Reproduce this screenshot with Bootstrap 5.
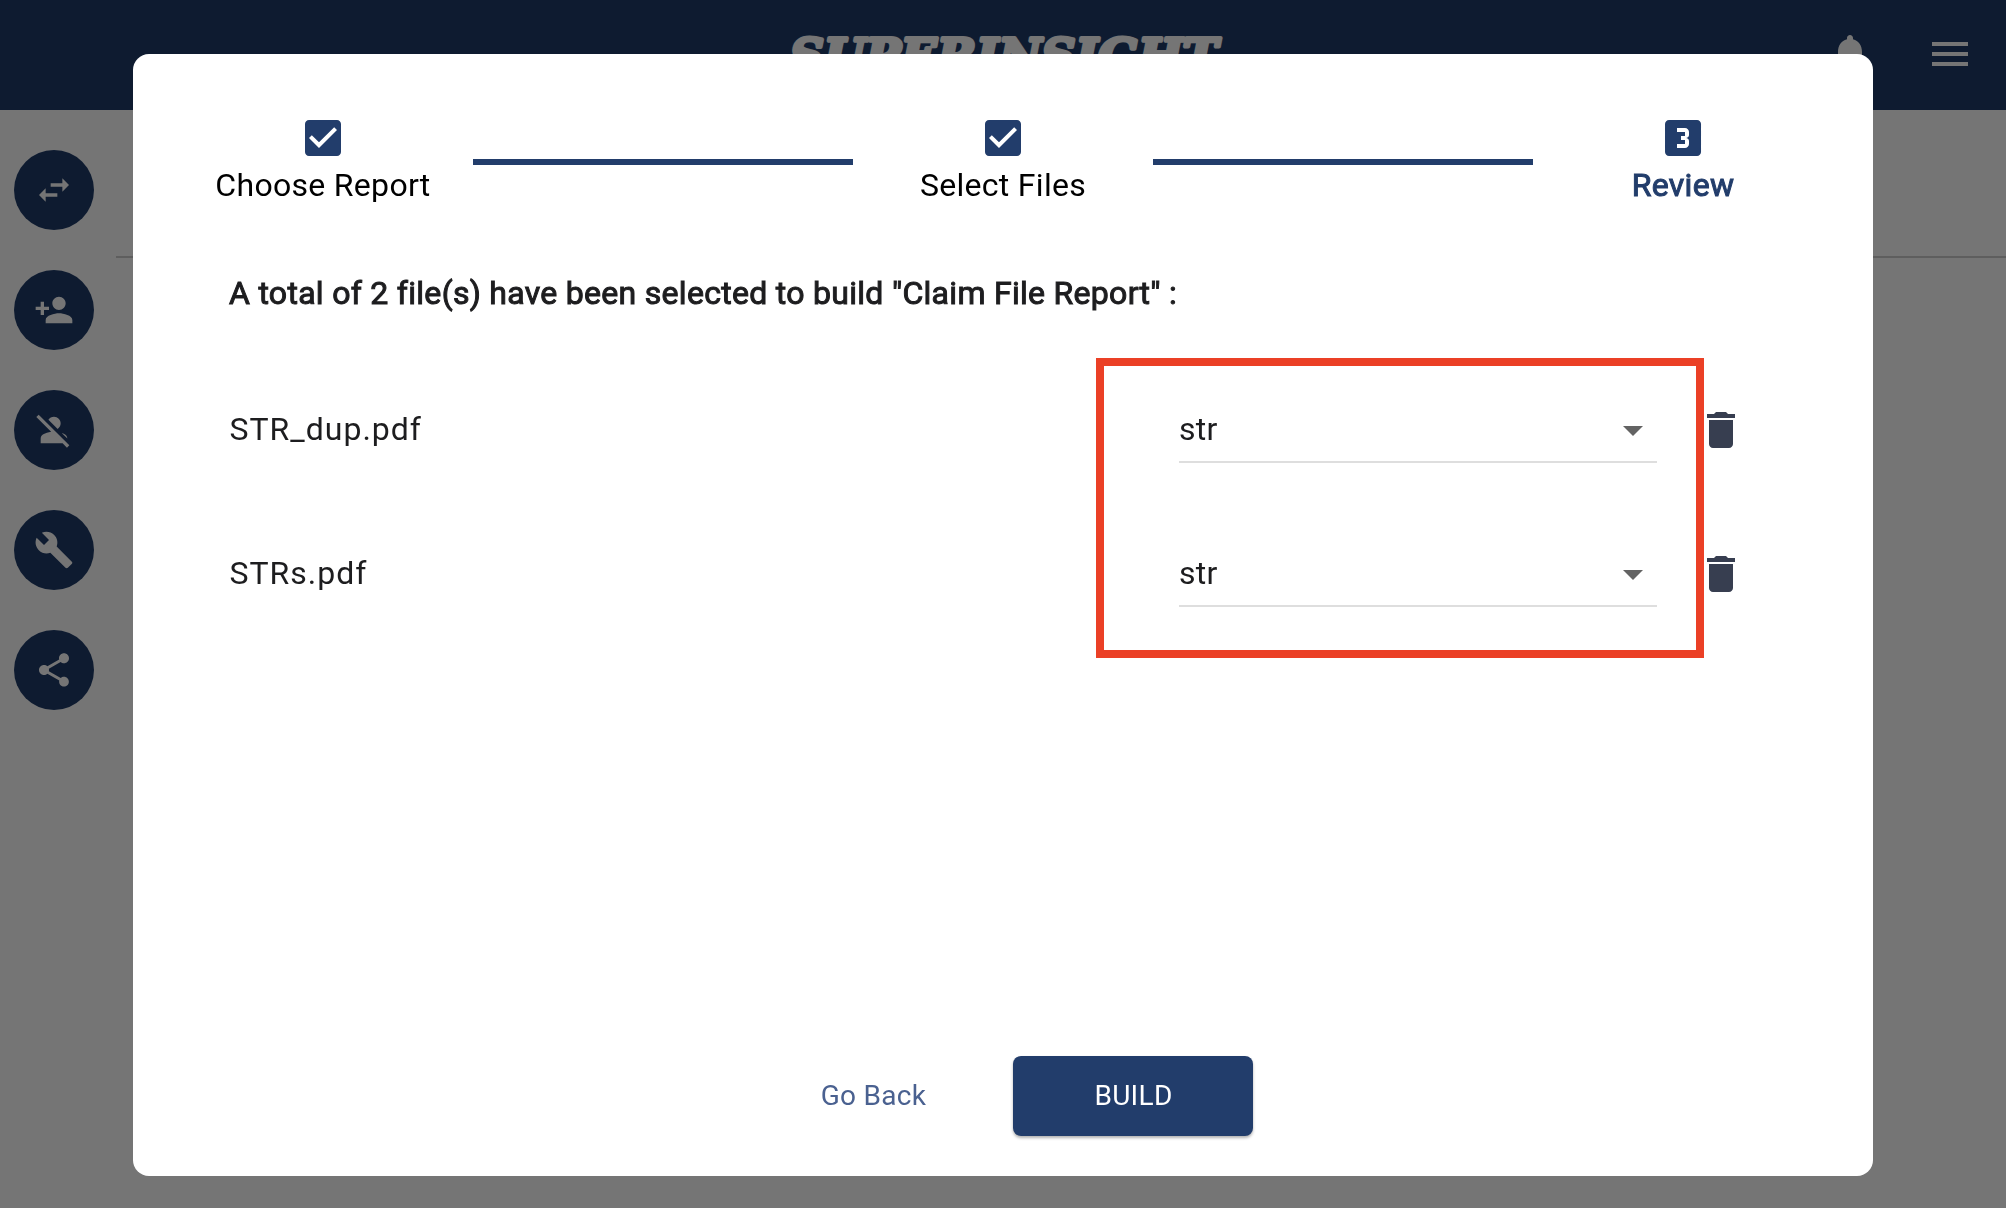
<!DOCTYPE html>
<html lang="en">
<head>
<meta charset="utf-8">
<meta name="viewport" content="width=device-width, initial-scale=1">
<title>Superinsight</title>
<link rel="stylesheet" href="https://cdn.jsdelivr.net/npm/bootstrap@5.3.0/dist/css/bootstrap.min.css">
<style>
  :root { --brand: #223d6b; --ink: #1d1d1f; }
  html { height: 100%; overflow: hidden; }
  body { font-family: Roboto, sans-serif; font-size: 32px; line-height: 40px; letter-spacing: .3px; color: var(--ink); background: #fff; height: 100%; overflow: hidden; }
  svg { display: block; fill: currentColor; flex: none; }
  .topbar { height: 110px; padding: 0 32px 2px; background: #1f3c6a; color: #fff; }
  .topbar-side { width: 150px; gap: 52px; }
  .brand-text { font: italic bold 46px "DejaVu Serif", serif; stroke: #fff; stroke-width: 4px; stroke-linejoin: round; }
  .rail { width: 116px; padding: 40px 0 0 14px; gap: 40px; }
  .rail-btn { width: 80px; height: 80px; background: #1f3c6a; border: 0; color: #fff; padding: 0; }
  .page-head { height: 148px; border-bottom: 2px solid #ccc; }
  .modal-backdrop.dim { opacity: .54; width: 100%; height: 100%; }
  .wizard { width: 1740px; max-width: none; margin: 54px auto 0; }
  .wizard .modal-content { height: 1122px; border: 0; border-radius: 16px; padding: 60px 50px 40px; color: var(--ink); }
  .step-item { width: 280px; color: #000; gap: 3px; }
  .step-item svg { color: var(--brand); }
  .step-now { color: var(--brand); }
  .step-line { width: 380px; height: 6px; background: var(--brand); margin-top: 45px; }
  .heavier { -webkit-text-stroke: 1px currentColor; }
  .summary { margin: 68px 0 45px 46px; letter-spacing: .29px; }
  .file-list { margin-left: 46px; }
  .file-row { height: 144px; }
  .file-name { width: 950px; letter-spacing: 1px; padding: 0 0 2px .5px; }
  .type-select { width: 478px; height: 66px; border-bottom: 2px solid #dedede; padding-right: 14px; }
  .caret { width: 20px; height: 10px; background: #636363; clip-path: polygon(0 0, 100% 0, 50% 100%); margin-top: 4px; }
  .trash { color: #373e50; margin-left: 40px; }
  .callout-box { left: 867px; top: 0; width: 608px; height: 300px; border: 8px solid #eb4026; }
  .actions { gap: 20px; }
  .actions .btn { width: 240px; height: 80px; font-size: 28px; letter-spacing: .3px; border: 0; border-radius: 8px; padding: 0 0 0 1px; }
  .btn-back { color: #4a6190; }
  .btn-build, .btn-build:hover { background: var(--brand); color: #fff; box-shadow: 0 2px 3px rgba(0,0,0,.3); }
</style>
<script src="https://cdn.jsdelivr.net/npm/bootstrap@5.3.0/dist/js/bootstrap.bundle.min.js"></script>
</head>
<body>
<header class="topbar d-flex align-items-center justify-content-between">
  <div class="topbar-side"></div>
  <svg width="440" height="60" viewBox="0 0 440 60" style="margin-left:8px"><text class="brand-text" x="3" y="47.5" textLength="428" lengthAdjust="spacingAndGlyphs">SUPERINSIGHT</text></svg>
  <div class="topbar-side d-flex justify-content-end">
    <svg width="48" height="48" viewBox="0 0 24 24"><path d="M12 22c1.1 0 2-.9 2-2h-4c0 1.1.89 2 2 2zm6-6v-5c0-3.07-1.64-5.64-4.5-6.32V4c0-.83-.67-1.5-1.5-1.5s-1.5.67-1.5 1.5v.68C7.63 5.36 6 7.92 6 11v5l-2 2v1h16v-1l-2-2z"/></svg>
    <svg width="48" height="48" viewBox="0 0 24 24"><path d="M3 18h18v-2H3v2zm0-5h18v-2H3v2zm0-7v2h18V6H3z"/></svg>
  </div>
</header>
<main class="d-flex">
  <nav class="rail d-flex flex-column">
    <button class="rail-btn rounded-circle d-flex align-items-center justify-content-center" aria-label="Switch"><svg width="40" height="40" viewBox="0 0 24 24"><path d="M6.99 11L3 15l3.99 4v-3H14v-2H6.99v-3zM21 9l-3.99-4v3H10v2h7.01v3L21 9z"/></svg></button>
    <button class="rail-btn rounded-circle d-flex align-items-center justify-content-center" aria-label="Add person"><svg width="40" height="40" viewBox="0 0 24 24"><path d="M15 12c2.21 0 4-1.79 4-4s-1.79-4-4-4-4 1.79-4 4 1.79 4 4 4zm-9-2V7H4v3H1v2h3v3h2v-3h3v-2H6zm9 4c-2.67 0-8 1.34-8 4v2h16v-2c0-2.66-5.33-4-8-4z"/></svg></button>
    <button class="rail-btn rounded-circle d-flex align-items-center justify-content-center" aria-label="Remove person"><svg width="40" height="40" viewBox="0 0 24 24"><path d="M8.65 5.82C9.36 4.72 10.6 4 12 4c2.21 0 4 1.79 4 4 0 1.4-.72 2.64-1.82 3.35L8.65 5.82zM20 17.17c-.02-1.1-.63-2.11-1.61-2.62-.54-.28-1.13-.54-1.77-.76L20 17.17zm1.19 4.02L2.81 2.81 1.39 4.22l8.89 8.89c-1.81.23-3.39.79-4.67 1.45-1 .51-1.61 1.54-1.61 2.66V20h13.17l2.61 2.61 1.41-1.42z"/></svg></button>
    <button class="rail-btn rounded-circle d-flex align-items-center justify-content-center" aria-label="Tools"><svg width="40" height="40" viewBox="0 0 24 24"><path d="M22.7 19l-9.1-9.1c.9-2.3.4-5-1.5-6.9-2-2-5-2.4-7.4-1.3L9 6 6 9 1.6 4.7C.4 7.1.9 10.1 2.9 12.1c1.9 1.9 4.6 2.4 6.9 1.5l9.1 9.1c.4.4 1 .4 1.4 0l2.3-2.3c.5-.4.5-1.1.1-1.4z"/></svg></button>
    <button class="rail-btn rounded-circle d-flex align-items-center justify-content-center" aria-label="Share"><svg width="40" height="40" viewBox="0 0 24 24"><path d="M18 16.08c-.76 0-1.44.3-1.96.77L8.91 12.7c.05-.23.09-.46.09-.7s-.04-.47-.09-.7l7.05-4.11c.54.5 1.25.81 2.04.81 1.66 0 3-1.34 3-3s-1.34-3-3-3-3 1.34-3 3c0 .24.04.47.09.7L8.04 9.81C7.5 9.31 6.79 9 6 9c-1.66 0-3 1.34-3 3s1.34 3 3 3c.79 0 1.5-.31 2.04-.81l7.12 4.16c-.05.21-.08.43-.08.65 0 1.61 1.31 2.92 2.92 2.92s2.92-1.31 2.92-2.92-1.31-2.92-2.92-2.92z"/></svg></button>
  </nav>
  <section class="flex-grow-1"><div class="page-head"></div></section>
</main>

<div class="modal-backdrop dim"></div>
<div class="modal show d-block overflow-hidden" tabindex="-1" role="dialog">
  <div class="modal-dialog wizard">
    <div class="modal-content">
      <div class="d-flex justify-content-between">
        <div class="step-item d-flex flex-column align-items-center">
          <svg width="48" height="48" viewBox="0 0 24 24"><path d="M19 3H5c-1.11 0-2 .9-2 2v14c0 1.1.89 2 2 2h14c1.11 0 2-.9 2-2V5c0-1.1-.89-2-2-2zm-9 14l-5-5 1.41-1.41L10 14.17l7.59-7.59L19 8l-9 9z"/></svg>
          <span>Choose Report</span>
        </div>
        <div class="step-line"></div>
        <div class="step-item d-flex flex-column align-items-center">
          <svg width="48" height="48" viewBox="0 0 24 24"><path d="M19 3H5c-1.11 0-2 .9-2 2v14c0 1.1.89 2 2 2h14c1.11 0 2-.9 2-2V5c0-1.1-.89-2-2-2zm-9 14l-5-5 1.41-1.41L10 14.17l7.59-7.59L19 8l-9 9z"/></svg>
          <span>Select Files</span>
        </div>
        <div class="step-line"></div>
        <div class="step-item step-now d-flex flex-column align-items-center">
          <svg width="48" height="48" viewBox="0 0 24 24"><path d="M19.01 3h-14c-1.1 0-2 .9-2 2v14c0 1.1.9 2 2 2h14c1.1 0 2-.9 2-2V5c0-1.1-.9-2-2-2zM15 10.5c0 .83-.67 1.5-1.5 1.5.83 0 1.5.67 1.5 1.5V15c0 1.11-.9 2-2 2H9v-2h4v-2h-2v-2h2V9H9V7h4c1.1 0 2 .89 2 2v1.5z"/></svg>
          <span class="heavier">Review</span>
        </div>
      </div>

      <div class="summary heavier">A total of 2 file(s) have been selected to build "Claim File Report" :</div>

      <div class="file-list position-relative">
        <div class="file-row d-flex align-items-center">
          <div class="file-name">STR_dup.pdf</div>
          <div class="type-select d-flex align-items-center justify-content-between"><span>str</span><span class="caret"></span></div>
          <svg class="trash" width="48" height="48" viewBox="0 0 24 24"><path d="M6 19c0 1.1.9 2 2 2h8c1.1 0 2-.9 2-2V7H6v12zM19 4h-3.5l-1-1h-5l-1 1H5v2h14V4z"/></svg>
        </div>
        <div class="file-row d-flex align-items-center">
          <div class="file-name">STRs.pdf</div>
          <div class="type-select d-flex align-items-center justify-content-between"><span>str</span><span class="caret"></span></div>
          <svg class="trash" width="48" height="48" viewBox="0 0 24 24"><path d="M6 19c0 1.1.9 2 2 2h8c1.1 0 2-.9 2-2V7H6v12zM19 4h-3.5l-1-1h-5l-1 1H5v2h14V4z"/></svg>
        </div>
        <div class="callout-box position-absolute"></div>
      </div>

      <div class="actions d-flex justify-content-center mt-auto">
        <button class="btn btn-back">Go Back</button>
        <button class="btn btn-build">BUILD</button>
      </div>
    </div>
  </div>
</div>
</body>
</html>
